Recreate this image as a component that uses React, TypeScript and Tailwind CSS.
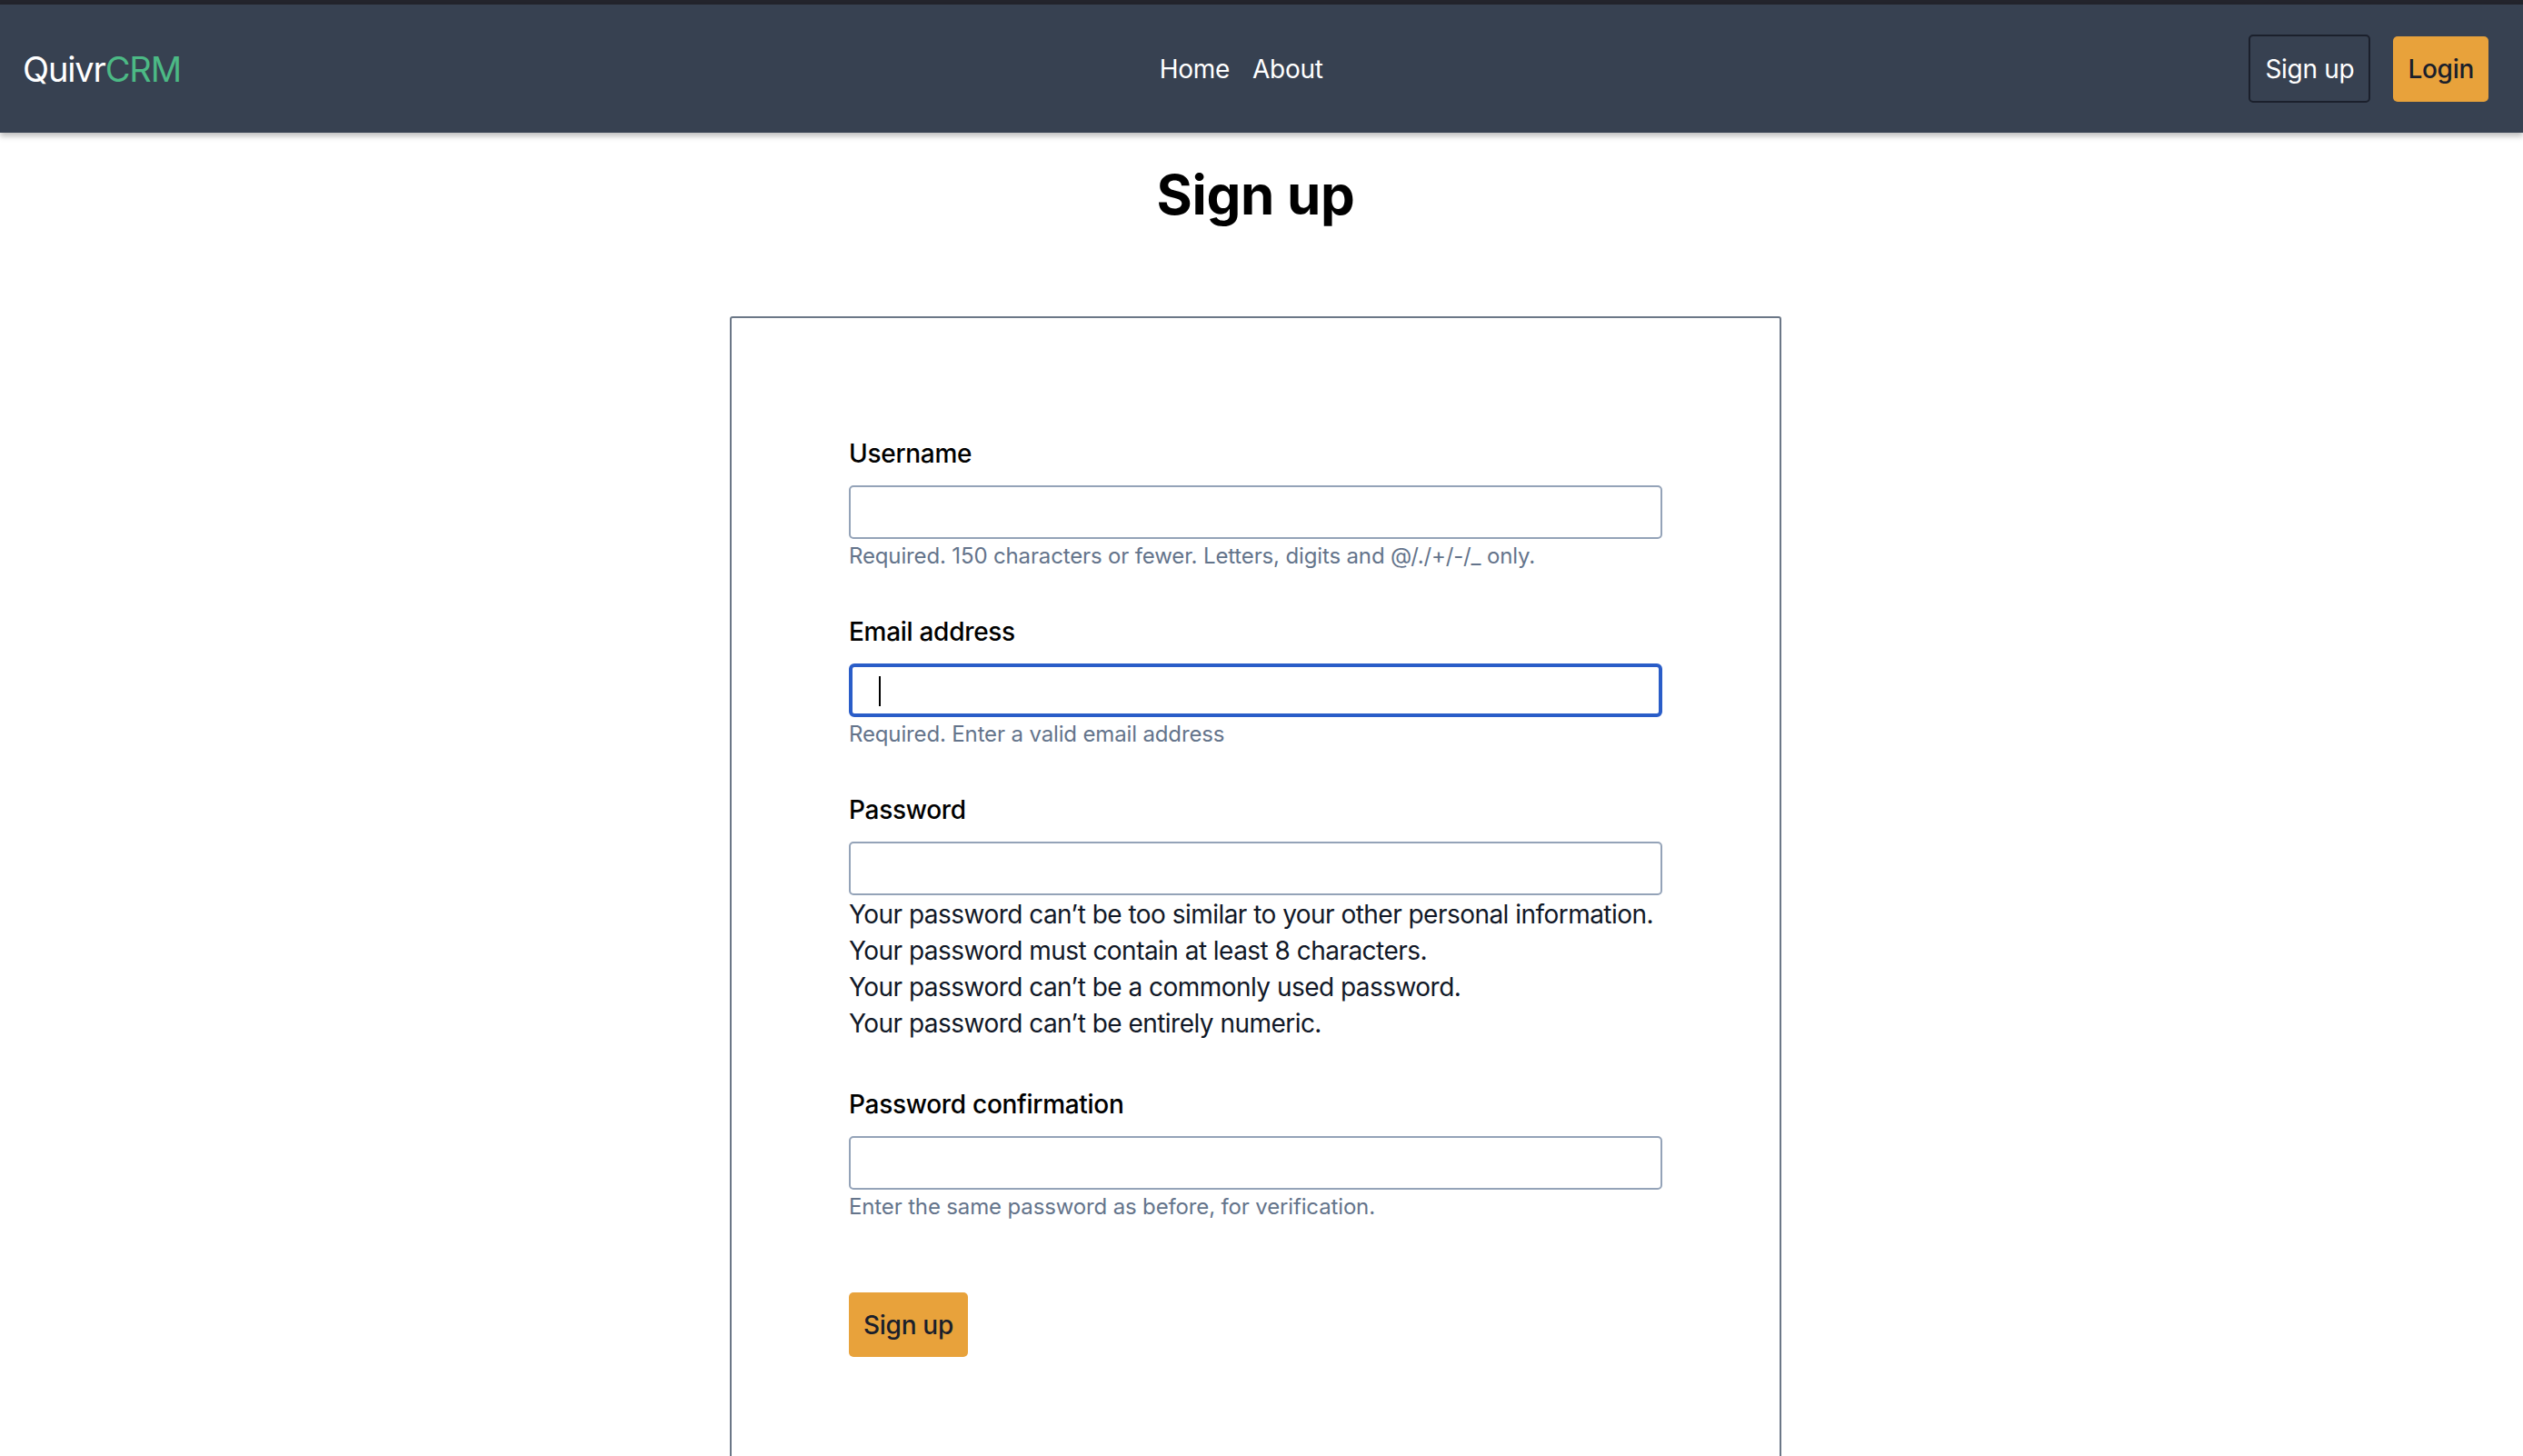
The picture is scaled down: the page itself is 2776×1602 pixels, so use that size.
import React from "react"

const fields = [
  { label: "Username", help: "Required. 150 characters or fewer. Letters, digits and @/./+/-/_ only." },
]

function Label({ children }: { children: React.ReactNode }) {
  return <label className="block text-[28px] leading-[40px] font-medium text-black">{children}</label>
}

function Help({ children }: { children: React.ReactNode }) {
  return <p className="mt-[3px] text-[24px] leading-[32px] tracking-[-0.006em] text-[#64748b]">{children}</p>
}

function TextInput({ type = "text" }: { type?: string }) {
  return (
    <input
      type={type}
      className="mt-[15px] block w-full h-[59px] rounded-[5px] border-2 border-[#94a3b8] bg-white px-[24px] text-[28px] outline-none"
    />
  )
}

export default function App() {
  return (
    <div className="min-h-screen bg-white font-['Inter','Liberation_Sans',sans-serif] tracking-[-0.018em] text-black">
      <div className="h-[5px] bg-[#23242c]" />
      <nav className="relative z-10 flex h-[141px] items-center bg-[#374151] pl-[25px] pr-[38px] shadow-[0_4px_6px_rgba(0,0,0,0.25)]">
        <a className="text-[38px] leading-none tracking-[-0.03em] text-white">
          Quivr<span className="text-[#4cb985]">CRM</span>
        </a>
        <div className="flex flex-1 justify-center gap-[25px] pl-[58px] text-[28px] text-white">
          <a>Home</a>
          <a>About</a>
        </div>
        <div className="flex items-center gap-[25px]">
          <button className="h-[75px] rounded-[5px] border-2 border-[#1b202c] px-[16px] text-[28px] leading-[40px] text-white">
            Sign up
          </button>
          <button className="h-[72px] rounded-[5px] bg-[#e8a23b] px-[16px] text-[28px] leading-[40px] font-medium text-[#1a1f2b]">
            Login
          </button>
        </div>
      </nav>

      <main className="flex flex-col items-center pr-[13px]">
        <h1 className="mt-[32px] text-[60px] leading-[72px] font-bold">Sign up</h1>

        <div className="mt-[98px] w-[1157px] rounded-[3px] border-2 border-[#6b7787] px-[129px] pt-[129px] pb-[200px]">
          {fields.map((f) => (
            <div key={f.label}>
              <Label>{f.label}</Label>
              <TextInput />
              <Help>{f.help}</Help>
            </div>
          ))}

          <div className="mt-[47px]">
            <Label>Email address</Label>
            <div className="relative mt-[15px]">
              <input
                type="email"
                className="block w-full h-[59px] rounded-[6px] border-[4px] border-[#2a5dc8] bg-white px-[24px] text-[28px] outline-none"
              />
              <span className="absolute left-[33px] top-[14px] h-[33px] w-[2px] bg-black" />
            </div>
            <Help>Required. Enter a valid email address</Help>
          </div>

          <div className="mt-[47px]">
            <Label>Password</Label>
            <TextInput type="password" />
            <ul className="mt-[1px] whitespace-nowrap text-[28px] leading-[40px] tracking-[-0.019em] text-[#111827]">
              <li>Your password can’t be too similar to your other personal information.</li>
              <li>Your password must contain at least 8 characters.</li>
              <li>Your password can’t be a commonly used password.</li>
              <li>Your password can’t be entirely numeric.</li>
            </ul>
          </div>

          <div className="mt-[49px]">
            <Label>Password confirmation</Label>
            <TextInput type="password" />
            <Help>Enter the same password as before, for verification.</Help>
          </div>

          <button className="mt-[78px] h-[71px] rounded-[5px] bg-[#e8a23b] px-[16px] text-[28px] leading-[40px] font-medium text-[#1a1f2b]">
            Sign up
          </button>
        </div>
      </main>
    </div>
  )
}
